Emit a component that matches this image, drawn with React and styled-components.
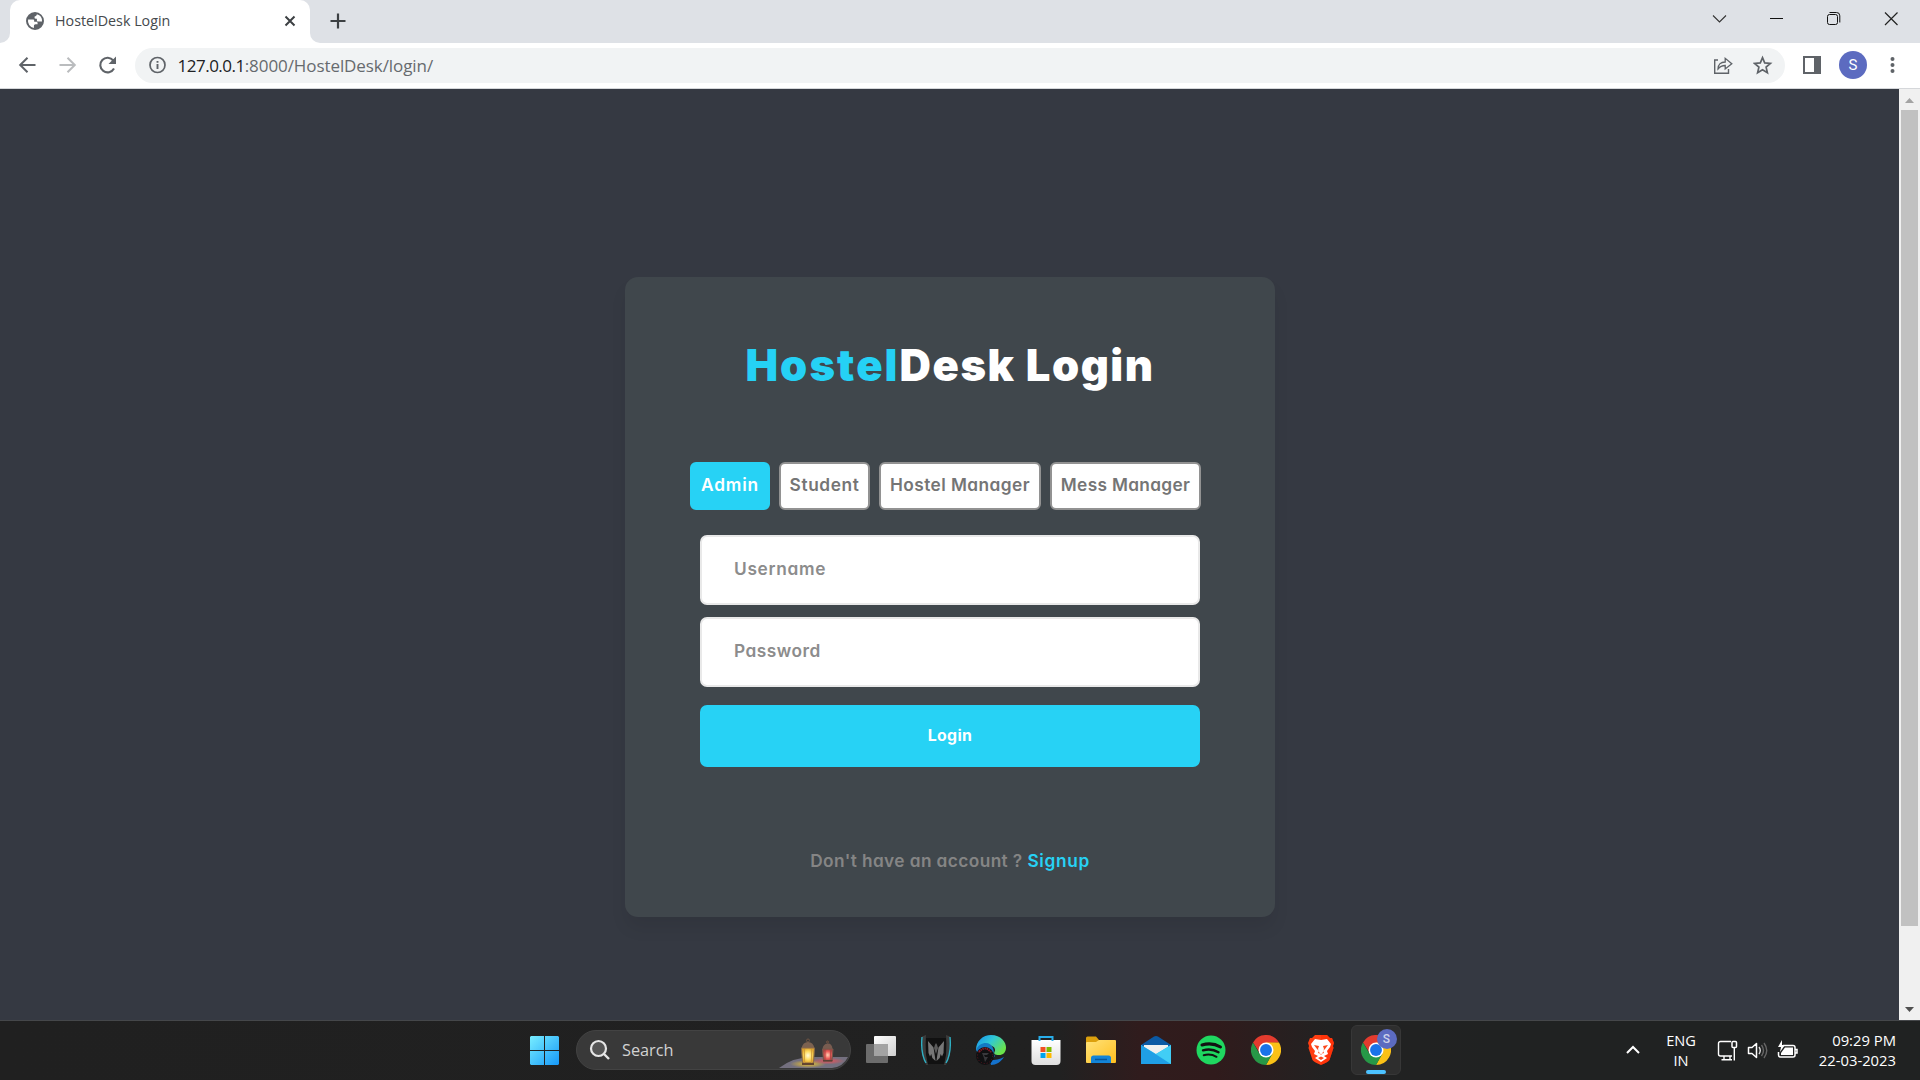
import React from "react";
import styled, { createGlobalStyle, css } from "styled-components";

const Global = createGlobalStyle`
  *{box-sizing:border-box}
  html,body{margin:0;padding:0;overflow:hidden}
  body{width:1920px;height:1080px}
`;
const ui = css`font-family:"Open Sans","Noto Sans",sans-serif;`;
const geo = css`font-family:Inter,"Open Sans",sans-serif;font-feature-settings:"cv11","ss03";`;

const Screen = styled.div`width:1920px;height:1080px;display:flex;flex-direction:column;overflow:hidden;${ui}`;

/* browser chrome */
const TabStrip = styled.div`height:43px;background:#dee1e6;display:flex;align-items:stretch;flex:none;`;
const TabLead = styled.div`width:10px;background:#fff;&::after{content:"";display:block;height:43px;background:#dee1e6;border-bottom-right-radius:10px;}`;
const TabTail = styled.div`width:10px;background:#fff;&::after{content:"";display:block;height:43px;background:#dee1e6;border-bottom-left-radius:10px;}`;
const Tab = styled.div`width:300px;background:#fff;border-radius:10px 10px 0 0;display:flex;align-items:center;padding:0 10px 1px 15px;`;
const TabTitle = styled.div`flex:1;margin-left:10px;font-size:14.3px;line-height:20px;color:#45494d;padding-bottom:1px;`;
const IconBox = styled.div`width:20px;height:20px;display:flex;align-items:center;justify-content:center;flex:none;svg{display:block;}`;
const NewTab = styled.div`margin:10px 0 0 6.5px;`;
const WinControls = styled.div`margin-left:auto;display:flex;padding:9px 19px 0 0;gap:37.3px;`;

const Toolbar = styled.div`height:46px;background:#fff;border-bottom:1px solid #d5d7da;display:flex;align-items:center;flex:none;padding:0 17px 1px 17px;`;
const NavGroup = styled.div`display:flex;gap:20px;width:118px;flex:none;`;
const Omnibox = styled.div`width:1650px;flex:none;height:35px;border-radius:18px;background:#f1f3f4;display:flex;align-items:center;padding:0 12px;`;
const Url = styled.div`margin-left:10.5px;padding-top:1px;flex:1;font-size:17px;line-height:24px;color:#666a6e;letter-spacing:-.08px;b{font-weight:400;color:#202124;letter-spacing:-.5px;}`;
const OmniActions = styled.div`display:flex;gap:20px;`;
const BarActions = styled.div`display:flex;align-items:center;margin-left:17px;`;
const Avatar = styled.div`width:28px;height:28px;border-radius:50%;background:#5c6bc0;color:#fff;font:400 15px/28px Roboto,sans-serif;text-align:center;margin:0 15px 0 17px;`;

/* page */
const Viewport = styled.div`height:931px;display:flex;flex:none;`;
const Page = styled.main`width:1899px;background:#353942;display:flex;justify-content:center;align-items:flex-start;padding:188px 0 0 1px;${geo}`;
const Card = styled.section`width:650px;height:640px;background:#40474c;border-radius:13px;box-shadow:0 12px 18px -2px rgba(0,0,0,.08);display:flex;flex-direction:column;align-items:center;`;
const Title = styled.h1`margin:58px 0 0;font-size:43.5px;line-height:60px;font-weight:900;color:#fff;white-space:nowrap;letter-spacing:1.55px;`;
const Accent = styled.span`color:#25d1f5;letter-spacing:2.1px;`;
const Tabs = styled.div`display:flex;gap:9px;margin-top:67px;width:520px;`;
const RoleTab = styled.button`
  width:${p => p.$w}px;height:48px;padding:0 0 2px;border-radius:6px;font-size:17.3px;font-weight:600;line-height:24px;white-space:nowrap;font-family:inherit;font-feature-settings:inherit;letter-spacing:${p => p.$ls}px;
  border:2px solid ${p => (p.$on ? "#27d2f5" : "#929292")};background:${p => (p.$on ? "#27d2f5" : "#fff")};color:${p => (p.$on ? "#fff" : "#757575")};
`;
const Form = styled.form`width:500px;display:flex;flex-direction:column;margin-top:25px;`;
const Field = styled.input`
  height:70px;width:500px;border:2px solid #e9e9e9;border-radius:7px;background:#fff;padding:0 32px 3px;margin-bottom:12px;
  font-family:inherit;font-feature-settings:inherit;font-size:17.3px;font-weight:600;letter-spacing:${p => p.$ls}px;
  &::placeholder{color:#8c8c8c;opacity:1;}
`;
const Submit = styled.button`height:62px;border:0;border-radius:7px;margin-top:6px;background:#27d2f5;color:#fff;font-family:inherit;font-feature-settings:inherit;font-size:15.8px;font-weight:700;letter-spacing:.35px;padding:0 0 2px;`;
const Footer = styled.p`margin:82px 0 0;font-size:17.3px;line-height:24px;font-weight:600;color:#858585;white-space:nowrap;letter-spacing:.4px;`;
const Link = styled.a`color:#27d2f5;letter-spacing:.65px;`;
const Scroll = styled.div`width:21px;background:#f0f0f0;display:flex;flex-direction:column;align-items:center;padding:9px 0 8px;justify-content:space-between;`;
const Thumb = styled.div`width:17px;height:816px;margin-bottom:74px;background:#c1c1c1;`;

/* taskbar */
const Taskbar = styled.footer`height:60px;border-top:1px solid #45474a;background:linear-gradient(90deg,#202020 0,#212121 1060px,#301c1d 1140px,#301b1c 1215px,#222 1330px,#202222 1500px,#202222 100%);display:flex;align-items:center;padding-bottom:1px;flex:none;`;
const Apps = styled.div`display:flex;align-items:center;margin-left:529px;width:873px;flex:none;`;
const Search = styled.div`margin-left:16px;width:275px;height:40px;border-radius:20px;background:#393939;border:1px solid #434343;display:flex;align-items:center;padding-left:12px;overflow:hidden;color:#d2d2d2;font-size:16.3px;line-height:22px;`;
const SearchLabel = styled.div`width:157px;margin-left:11px;`;
const AppRow = styled.div`display:flex;margin-left:2.5px;`;
const AppSlot = styled.div`width:55px;height:50px;display:flex;align-items:center;justify-content:center;svg{display:block;}`;
const ActiveSlot = styled.div`width:50px;height:50px;margin-left:2px;border-radius:6px;background:#2e2e2e;border:1px solid #373737;display:flex;align-items:center;justify-content:center;position:relative;svg{display:block;}`;
const Badge = styled.div`position:absolute;left:25px;top:3px;width:20px;height:20px;border-radius:50%;background:#5c6bc0;color:#cdd2ea;font:500 12px/20px Roboto,sans-serif;text-align:center;`;
const Indicator = styled.div`position:absolute;left:14px;bottom:0;width:20px;height:4px;border-radius:2px;background:#4cc2ff;`;
const Tray = styled.div`margin-left:auto;display:flex;align-items:center;padding-right:24px;color:#fff;font-size:14.8px;line-height:20px;`;
const Lang = styled.div`width:40px;margin-left:20px;text-align:center;font-size:14.6px;`;
const Status = styled.div`display:flex;gap:9px;margin-left:16px;`;
const Clock = styled.div`text-align:right;width:98px;padding-bottom:1px;white-space:nowrap;`;

const S = ({ w = 20, h, vb, children, ...r }) => (
  <svg width={w} height={h || w} viewBox={vb || `0 0 ${w} ${h || w}`} fill="none" {...r}>{children}</svg>
);

const Chrome = () => (
  <S w={30} vb="0 0 48 48">
    <path fill="#e33b2e" d="M3.2 12A24 24 0 0 1 44.8 12L24 13 14.5 29.5z" />
    <path fill="#fbc116" d="M44.8 12A24 24 0 0 1 24 48L34 29.5 24 12z" />
    <path fill="#279847" d="M3.2 12A24 24 0 0 0 24 48L34.4 30 24 34.5 13.6 30z" />
    <circle cx="24" cy="24" r="12" fill="#fff" /><circle cx="24" cy="24" r="9.5" fill="#1a73e8" />
  </S>
);

const Lanterns = () => (
  <S w={70} h={38}>
    <defs>
      <radialGradient id="gl"><stop offset="0" stopColor="#fffbe0" /><stop offset=".55" stopColor="#ffdc62" /><stop offset="1" stopColor="#e0a62c" /></radialGradient>
      <radialGradient id="gr"><stop offset="0" stopColor="#ffd2b5" /><stop offset=".6" stopColor="#ee5d5a" /><stop offset="1" stopColor="#a94543" /></radialGradient>
      <radialGradient id="p1"><stop offset="0" stopColor="#eac22f" /><stop offset="1" stopColor="#eac22f" stopOpacity="0" /></radialGradient>
      <radialGradient id="p2"><stop offset="0" stopColor="#e8535a" /><stop offset="1" stopColor="#e8535a" stopOpacity="0" /></radialGradient>
    </defs>
    <path d="M0 37Q14 26 34 26H69Q64 36 53 37z" fill="#74707f" />
    <ellipse cx="29" cy="33" rx="18" ry="4" fill="url(#p1)" /><ellipse cx="49" cy="30" rx="17" ry="3.5" fill="url(#p2)" />
    <circle cx="29" cy="9.500" r="1.500" stroke="#705443" /><path d="M22.500 17Q24 11 29 11T35.500 17z" fill="#7c6250" />
    <path d="M22.500 17H35.500L34.500 32H23.500z" fill="url(#gl)" stroke="#8a6a48" /><path d="M25.500 18v14M32.500 18v14" stroke="#c9983c" strokeWidth=".8" /><path d="M23 32h12v2H23z" fill="#654630" />
    <circle cx="48.500" cy="11" r="1" stroke="#705443" /><path d="M43.500 18Q44 13 48.500 12.500T53.500 18z" fill="#785c50" />
    <path d="M43.500 18h10.500L53 30h-8.500z" fill="url(#gr)" stroke="#74594b" /><path d="M46 19v10M51.500 19v10" stroke="#a44742" strokeWidth=".8" /><path d="M44 29h9.500v1.500H44z" fill="#5d4036" />
  </S>
);

export default function App() {
  return (
    <Screen>
      <Global />
      <TabStrip>
        <TabLead />
        <Tab>
          <IconBox><S w={20} vb="0 0 24 24"><path fill="#5f6368" fillRule="evenodd" d="M12 1.200a10.800 10.800 0 1 0 0 21.600a10.800 10.800 0 0 0 0-21.600zM10.700 20.300A8.400 8.400 0 0 1 3.700 10.300L5 10.300h4.500c1 0 1.500.7 1.500 1.500v1h2.500c1 0 1.600.7 1.600 1.600v1.500h-2.400c-1.200 0-2 1-2 2zM14.300 4c-.4 1.700-1.300 2.600-2.800 2.600v1.600c0 .8.600 1 1.300 1h1.500v2.200c0 .7.500 1.200 1.200 1.200h4.900A8.400 8.400 0 0 0 14.300 4z" /></S></IconBox>
          <TabTitle>HostelDesk Login</TabTitle>
          <IconBox><S><path d="M5.500 5.500l9 9M14.500 5.500l-9 9" stroke="#3c4043" strokeWidth="2" /></S></IconBox>
        </Tab>
        <TabTail />
        <NewTab><S w={22}><path d="M11 3.500v15M3.500 11h15" stroke="#3c4043" strokeWidth="2.200" /></S></NewTab>
        <WinControls>
          <S><path d="M4 6.500l6.500 6.500L17 6.500" stroke="#333" strokeWidth="1.100" /></S>
          <S><path d="M4 9.500h13" stroke="#111" /></S>
          <S><rect x="3.500" y="5.500" width="10" height="10" rx="2" stroke="#111" /><path d="M5.500 3.500h7a3.300 3.300 0 0 1 3.300 3.300V13.500" stroke="#111" /></S>
          <S><path d="M4 3.500l12.500 12.500M16.500 3.500L4 16" stroke="#222" strokeWidth="1.200" /></S>
        </WinControls>
      </TabStrip>
      <Toolbar>
        <NavGroup>
          <S><path d="M18.500 10H3.500M10.500 2.700L3.200 10l7.300 7.300" stroke="#5f6368" strokeWidth="2" /></S>
          <S><path d="M2.500 10h15M10.500 2.700l7.300 7.300-7.300 7.300" stroke="#babcbe" strokeWidth="2" /></S>
          <S><path d="M17 13.500A7.300 7.300 0 1 1 16.300 5.500" stroke="#5f6368" strokeWidth="2.100" /><path d="M19 1.500v7.500h-7.500z" fill="#5f6368" /></S>
        </NavGroup>
        <Omnibox>
          <S><circle cx="10.500" cy="10" r="7.500" stroke="#5f6368" strokeWidth="1.700" /><path d="M10.500 9v5M10.500 6v1.700" stroke="#5f6368" strokeWidth="1.900" /></S>
          <Url><b>127.0.0.1</b>:8000/HostelDesk/login/</Url>
          <OmniActions>
            <S><path d="M5 5H1.700V18.300H15.500V14" stroke="#5f6368" strokeWidth="1.400" /><path d="M5 14C5 9 8 7 12.200 7V3.300L18.800 8.700 12.200 14V10.500C9 10.500 7 11.500 5 14z" stroke="#5f6368" strokeWidth="1.300" /></S>
            <S><path d="M9.500 2.700l2.200 5.200 5.700.5-4.300 3.700 1.300 5.600L9.500 14.800l-4.900 2.900 1.300-5.600L1.600 8.400l5.700-.5z" stroke="#5f6368" strokeWidth="1.700" /></S>
          </OmniActions>
        </Omnibox>
        <BarActions>
          <S><rect x="2" y="2" width="16" height="16" stroke="#5f6368" strokeWidth="2" /><path d="M12 2h6v16h-6z" fill="#5f6368" /></S>
          <Avatar>S</Avatar>
          <S><g fill="#5f6368"><circle cx="10.500" cy="4" r="2" /><circle cx="10.500" cy="10" r="2" /><circle cx="10.500" cy="16" r="2" /></g></S>
        </BarActions>
      </Toolbar>
      <Viewport>
        <Page>
          <Card>
            <Title><Accent>Hostel</Accent>Desk Login</Title>
            <Tabs>
              <RoleTab $on $w={80} $ls={0.85}>Admin</RoleTab>
              <RoleTab $w={91} $ls={0.6}>Student</RoleTab>
              <RoleTab $w={162} $ls={0.43}>Hostel Manager</RoleTab>
              <RoleTab $w={151} $ls={0.32}>Mess Manager</RoleTab>
            </Tabs>
            <Form>
              <Field placeholder="Username" $ls={0.7} />
              <Field placeholder="Password" type="password" $ls={0.5} />
              <Submit type="button">Login</Submit>
            </Form>
            <Footer>Don't have an account ? <Link>Signup</Link></Footer>
          </Card>
        </Page>
        <Scroll>
          <S w={9} h={5}><path d="M0 5L4.500 0 9 5z" fill="#a3a3a3" /></S>
          <Thumb />
          <S w={9} h={5}><path d="M0 0h9L4.500 5z" fill="#505050" /></S>
        </Scroll>
      </Viewport>
      <Taskbar>
        <Apps>
          <S w={31}><defs><linearGradient id="win" x1="0" y1="0" x2="1" y2="1"><stop stopColor="#78eeff" /><stop offset="1" stopColor="#1698f8" /></linearGradient></defs><path fill="url(#win)" d="M2 1h13v14H1V2zM16 1h13l1 1v13H16zM1 16h14v14H2l-1-1zM16 16h14v13l-1 1H16z" /></S>
          <Search>
            <S w={22}><circle cx="9.500" cy="9.500" r="7.500" stroke="#e6e6e6" strokeWidth="2.200" fill="#555" /><path d="M15 15l5 5" stroke="#e6e6e6" strokeWidth="2.400" /></S>
            <SearchLabel>Search</SearchLabel>
            <Lanterns />
          </Search>
          <AppRow>
            <AppSlot><S w={30}><defs><linearGradient id="tv" x1="0" y1="0" x2="1" y2="1"><stop stopColor="#fff" /><stop offset="1" stopColor="#cfcfcf" /></linearGradient></defs><rect x="8" y="1" width="22" height="20" rx="1" fill="url(#tv)" /><rect x="0" y="9" width="22" height="19" rx="1" fill="#6c6c6c" /><path d="M8 9h14v12H8z" fill="#a3a3a3" /></S></AppSlot>
            <AppSlot><S w={30}><path d="M5 3h20l1 26H4z" fill="#111" /><path d="M1 1.500L5 0 4.500 9 5 20 7 30H5L1.500 20z" fill="#3c3c3c" /><path d="M29 1.500L25 0l.5 9L25 20 23 30h2l3.500-10z" fill="#3c3c3c" /><path d="M1 2C0 13 1 21 5 28M29 2c1 11 0 19-4 26" stroke="#2fb0c4" strokeWidth="1.400" /><path d="M7 6l5.500 6.500L14 22l.5 4-3.200-3-1-4-1.300 2.500L7.500 18zM23 6l-5.500 6.500L16 22l-.5 4 3.200-3 1-4 1.300 2.500 1.500-3.500z" fill="#777" /><path d="M13 13l1.500-5 .5 2 .5-2 1.500 5-2 6z" fill="#5b5b5b" /></S></AppSlot>
            <AppSlot><S w={30}><defs><linearGradient id="eg" x1="0" y1="0" x2="1" y2=".6"><stop stopColor="#168cf0" /><stop offset=".5" stopColor="#30c8d5" /><stop offset="1" stopColor="#6be34b" /></linearGradient></defs><path d="M0 15C0 6 7 0 15 0c10 0 15 7 15 12.500 0 5-3 7.500-7 7.500-4 0-6-1-4-4C20 11 13 7 4 16z" fill="url(#eg)" /><path d="M0 15C3 7 14 5 17 13c2 5-1 5 2 8l-4 4-10-2z" fill="#1479c4" /><path d="M14 25c5 0 10-.5 14-3-3 5-8 8-13 8z" fill="#1471cc" /><circle cx="9" cy="21" r="9" fill="#101012" /><path d="M3 17q6-7 12 0" stroke="#8d1b29" strokeWidth="2" strokeDasharray="1.500 .7" /><path d="M6 18h7l-2 2H8l1 2h3l-3 5-1-4z" fill="#38383c" /><circle cx="9" cy="21" r="7.500" stroke="#5c1720" strokeDasharray="1 2" /></S></AppSlot>
            <AppSlot><S w={30}><defs><linearGradient id="st" x1="0" y1="0" x2="0" y2="1"><stop stopColor="#fff" /><stop offset="1" stopColor="#dedede" /></linearGradient></defs><path d="M.500 5h29v21a4 4 0 0 1-4 4h-21a4 4 0 0 1-4-4z" fill="url(#st)" /><path d="M8.500 6V2h13v4" stroke="#28aeea" strokeWidth="2" /><path d="M9.500 12h5v5h-5z" fill="#f25022" /><path d="M15.500 12h5v5h-5z" fill="#7fba00" /><path d="M9.500 18h5v5h-5z" fill="#00a4ef" /><path d="M15.500 18h5v5h-5z" fill="#ffb900" /></S></AppSlot>
            <AppSlot><S w={30}><defs><linearGradient id="fo" x1="0" y1="0" x2="1" y2="1"><stop stopColor="#ffe27a" /><stop offset="1" stopColor="#ffbf1e" /></linearGradient></defs><path d="M0 3q0-1.500 1.500-1.500H10l3 3.500v6H0z" fill="#dca00d" /><path d="M0 8q0-1 1-1h9l3-2h16q1 0 1 1v21q0 1-1 1H1q-1 0-1-1z" fill="url(#fo)" /><path d="M5 28v-5q0-2.500 2.500-2.500h15Q25 20.500 25 23v5z" fill="#1384d7" /><path d="M9 24.500h12" stroke="#06569b" strokeWidth="1.500" /></S></AppSlot>
            <AppSlot><S w={30}><path d="M0 10L13 1.500q2-1.200 4 0L30 10v5H0z" fill="#0b59a4" /><path d="M3 10h24v10H3z" fill="#efefef" /><path d="M0 10l15 9 15-9v19H0z" fill="#33c0f0" /><path d="M0 10l30 19H0z" fill="#1f9fe6" /><path d="M15 19L30 10v19z" fill="#41cdf5" /></S></AppSlot>
            <AppSlot><S w={30}><circle cx="15" cy="15" r="14.500" fill="#1fd760" /><path d="M6 10q10-3 18.500 2" stroke="#121212" strokeWidth="3" strokeLinecap="round" /><path d="M7 15.300q8.500-2.300 15.500 1.900" stroke="#121212" strokeWidth="2.400" strokeLinecap="round" /><path d="M7.700 20.200q7-1.800 12.800 1.600" stroke="#121212" strokeWidth="2" strokeLinecap="round" /></S></AppSlot>
            <AppSlot><Chrome /></AppSlot>
            <AppSlot><S w={26} h={30}><path d="M7 0h12l3 3h2l2 5-1 3 .500 2-4 12q-1 2-8.500 5-7.500-3-8.500-5L.500 13 1 11 0 8l2-5h2z" fill="#ff3e12" /><path d="M13 0h6l3 3h2l2 5-1 3 .500 2-4 12q-1 2-8.500 5z" fill="#ff2500" fillOpacity=".45" /><path d="M7 4l6 1 6-1 4 5-1 3-3 4 1 3-4 2 3 2-6 4-6-4 3-2-4-2 1-3-3-4-1-3z" fill="#fff" /><path d="M6 10l5 1-1 3 1.500 4L13 20l1.500-2L16 14l-1-3 5-1-3 4-2 2 1 2-3 1-3-1 1-2-2-2zM10 23l3-1.500 3 1.500-3 2z" fill="#fb481d" /></S></AppSlot>
            <ActiveSlot><Chrome /><Badge>S</Badge><Indicator /></ActiveSlot>
          </AppRow>
        </Apps>
        <Tray>
          <S w={16}><path d="M2 11l6-6 6 6" stroke="#fff" strokeWidth="2" /></S>
          <Lang>ENG<br />IN</Lang>
          <Status>
            <S w={21}><path d="M14 1.500H3.500a2 2 0 0 0-2 2V14a2 2 0 0 0 2 2H15M7 16v3.500M13 16v3.500M4.500 19.700H15" stroke="#fff" strokeWidth="1.400" /><rect x="15" y="1.500" width="4.500" height="6" rx="1" stroke="#fff" strokeWidth="1.500" /><path d="M17.300 8v12.500" stroke="#fff" strokeWidth="1.400" /></S>
            <S w={21}><path d="M1.500 7.500H5L9.500 3.500v14L5 13.500H1.500z" stroke="#fff" strokeWidth="1.500" strokeLinejoin="round" /><path d="M12 7q2.500 3.500 0 7" stroke="#ddd" strokeWidth="1.400" /><path d="M14.500 5q4 5.500 0 11M17 3q5.500 7.500 0 15" stroke="#666" strokeWidth="1.400" /></S>
            <S w={21}><path d="M6 5.500h10a2 2 0 0 1 2 2V15a2 2 0 0 1-2 2H3.500a2 2 0 0 1-2-2v-3M18.500 9.500h1.500v3.500h-1.500" stroke="#fff" strokeWidth="1.500" /><path d="M8 7.500h8v7.500H4v-2z" fill="#fff" /><path d="M5 0L1 7h3l-1 5 5-7H5z" fill="#fff" /></S>
          </Status>
          <Clock>09:29 PM<br />22-03-2023</Clock>
        </Tray>
      </Taskbar>
    </Screen>
  );
}
